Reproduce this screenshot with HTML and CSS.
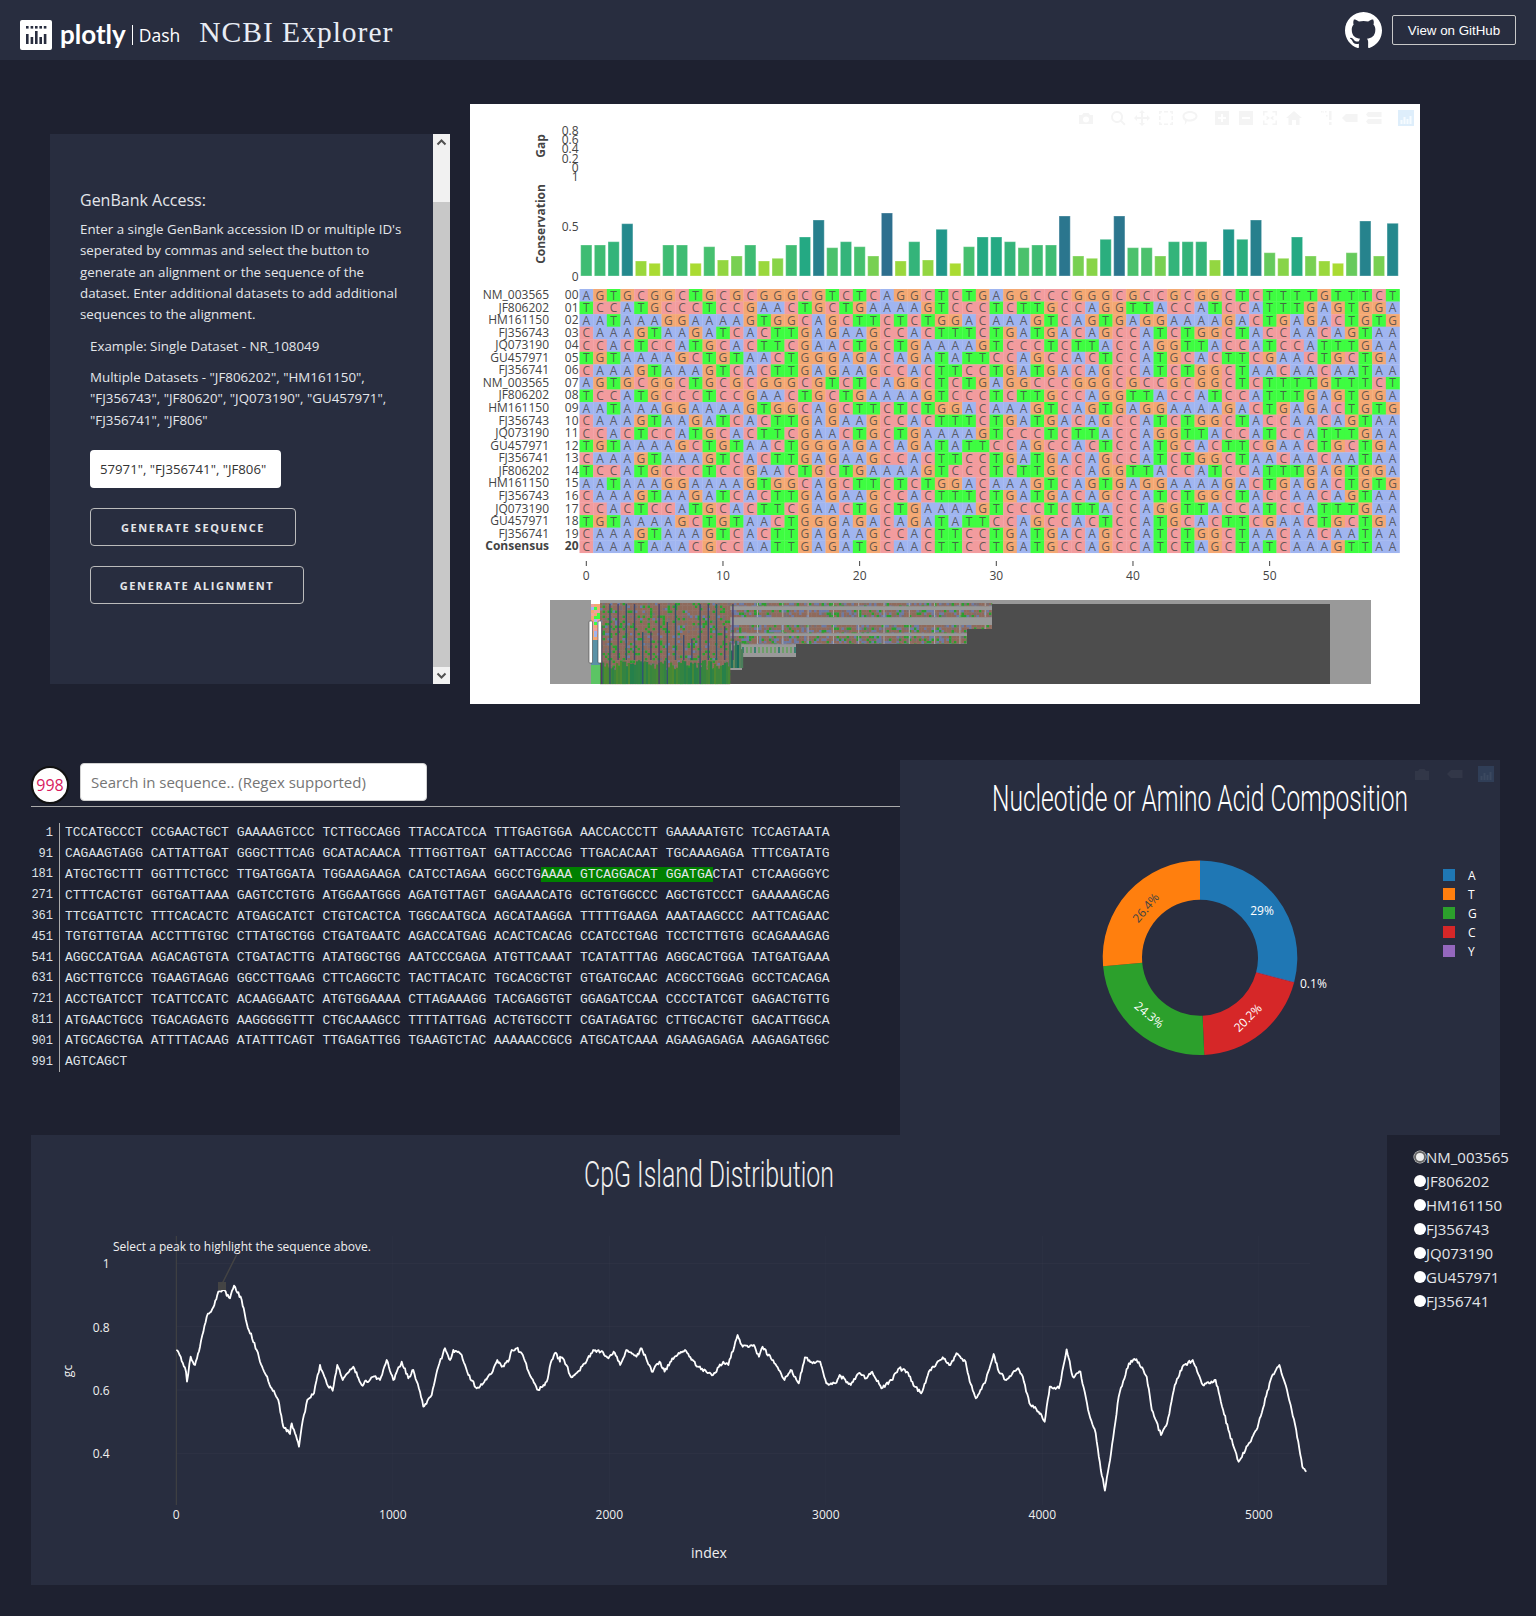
FILE: index.html
```html
<!DOCTYPE html>
<html lang="en">
<head>
    <meta charset="UTF-8">
    <meta name="viewport" content="width=device-width, initial-scale=1.0">
    <title>NCBI Explorer</title>
    <link rel="stylesheet" href="styles.css">
</head>
<body>
    <header class="navbar">
        <div class="brand">
            <svg class="brand-mark" viewBox="0 0 32 30" width="32" height="30">
                <rect width="32" height="30" rx="2" fill="#fff"/>
                <g fill="#282d3f">
                    <rect x="6" y="6" width="2.6" height="2.6"/>
                    <rect x="10.6" y="6" width="2.6" height="2.6"/>
                    <rect x="15" y="6" width="2.6" height="2.6"/>
                    <rect x="19.4" y="6" width="2.6" height="2.6"/>
                    <rect x="23.8" y="6" width="2.6" height="2.6"/>
                    <rect x="6" y="14" width="2.6" height="10"/>
                    <rect x="10.6" y="17" width="2.6" height="7"/>
                    <rect x="15" y="11" width="2.6" height="13"/>
                    <rect x="19.4" y="17" width="2.6" height="7"/>
                    <rect x="23.8" y="14" width="2.6" height="10"/>
                </g>
            </svg>
            <span class="brand-plotly">plotly</span>
            <span class="brand-dash">Dash</span>
            <h1 class="app-title">NCBI Explorer</h1>
        </div>
        <div class="nav-links">
            <svg class="github-mark" viewBox="0 0 16 16" width="37" height="37">
                <path fill="#fff" d="M8 0C3.58 0 0 3.58 0 8c0 3.54 2.29 6.53 5.47 7.59.4.07.55-.17.55-.38 0-.19-.01-.82-.01-1.49-2.01.37-2.53-.49-2.69-.94-.09-.23-.48-.94-.82-1.13-.28-.15-.68-.52-.01-.53.63-.01 1.08.58 1.23.82.72 1.21 1.87.87 2.33.66.07-.52.28-.87.51-1.07-1.78-.2-3.64-.89-3.64-3.95 0-.87.31-1.59.82-2.15-.08-.2-.36-1.02.08-2.12 0 0 .67-.21 2.2.82.64-.18 1.32-.27 2-.27.68 0 1.36.09 2 .27 1.53-1.04 2.2-.82 2.2-.82.44 1.1.16 1.92.08 2.12.51.56.82 1.27.82 2.15 0 3.07-1.87 3.75-3.65 3.95.29.25.54.73.54 1.48 0 1.07-.01 1.93-.01 2.2 0 .21.15.46.55.38A8.013 8.013 0 0016 8c0-4.42-3.58-8-8-8z"/>
            </svg>
            <a class="github-btn" href="#">View on GitHub</a>
        </div>
    </header>

    <section class="row-top">
        <div class="access-panel">
            <div class="access-body">
                <h3>GenBank Access:</h3>
                <p class="intro">Enter a single GenBank accession ID or multiple ID's seperated by commas and select the button to generate an alignment or the sequence of the dataset. Enter additional datasets to add additional sequences to the alignment.</p>
                <p class="example">Example: Single Dataset - NR_108049</p>
                <p class="example">Multiple Datasets - "JF806202", "HM161150", "FJ356743", "JF80620", "JQ073190", "GU457971", "FJ356741", "JF806"</p>
                <input class="accession-input" type="text" value='57971", "FJ356741", "JF806"' readonly>
                <button class="action-btn seq-btn">Generate Sequence</button>
                <button class="action-btn align-btn">Generate Alignment</button>
            </div>
            <div class="fake-scrollbar">
                <div class="scroll-arrow"><svg viewBox="0 0 17 17" width="17" height="17"><path d="M4.5 10.5 8.5 6.5 12.5 10.5" fill="none" stroke="#505050" stroke-width="2"/></svg></div>
                <div class="scroll-gap"></div>
                <div class="scroll-thumb"></div>
                <div class="scroll-arrow"><svg viewBox="0 0 17 17" width="17" height="17"><path d="M4.5 6.5 8.5 10.5 12.5 6.5" fill="none" stroke="#505050" stroke-width="2"/></svg></div>
            </div>
        </div>
        <svg class="alignment-plot" id="alignment" viewBox="470 104 950 600" width="950" height="600"></svg>
    </section>

    <section class="row-middle">
        <div class="sequence-col">
            <div class="search-row">
                <div class="match-count">998</div>
                <input class="search-input" type="text" placeholder="Search in sequence.. (Regex supported)">
            </div>
            <div class="sequence-block">
                <div class="seq-line"><span class="seq-num">1</span><span class="seq-text">TCCATGCCCT CCGAACTGCT GAAAAGTCCC TCTTGCCAGG TTACCATCCA TTTGAGTGGA AACCACCCTT GAAAAATGTC TCCAGTAATA</span></div>
                <div class="seq-line"><span class="seq-num">91</span><span class="seq-text">CAGAAGTAGG CATTATTGAT GGGCTTTCAG GCATACAACA TTTGGTTGAT GATTACCCAG TTGACACAAT TGCAAAGAGA TTTCGATATG</span></div>
                <div class="seq-line"><span class="seq-num">181</span><span class="seq-text">ATGCTGCTTT GGTTTCTGCC TTGATGGATA TGGAAGAAGA CATCCTAGAA GGCCTG<mark class="seq-hit">AAAA GTCAGGACAT GGATGA</mark>CTAT CTCAAGGGYC</span></div>
                <div class="seq-line"><span class="seq-num">271</span><span class="seq-text">CTTTCACTGT GGTGATTAAA GAGTCCTGTG ATGGAATGGG AGATGTTAGT GAGAAACATG GCTGTGGCCC AGCTGTCCCT GAAAAAGCAG</span></div>
                <div class="seq-line"><span class="seq-num">361</span><span class="seq-text">TTCGATTCTC TTTCACACTC ATGAGCATCT CTGTCACTCA TGGCAATGCA AGCATAAGGA TTTTTGAAGA AAATAAGCCC AATTCAGAAC</span></div>
                <div class="seq-line"><span class="seq-num">451</span><span class="seq-text">TGTGTTGTAA ACCTTTGTGC CTTATGCTGG CTGATGAATC AGACCATGAG ACACTCACAG CCATCCTGAG TCCTCTTGTG GCAGAAAGAG</span></div>
                <div class="seq-line"><span class="seq-num">541</span><span class="seq-text">AGGCCATGAA AGACAGTGTA CTGATACTTG ATATGGCTGG AATCCCGAGA ATGTTCAAAT TCATATTTAG AGGCACTGGA TATGATGAAA</span></div>
                <div class="seq-line"><span class="seq-num">631</span><span class="seq-text">AGCTTGTCCG TGAAGTAGAG GGCCTTGAAG CTTCAGGCTC TACTTACATC TGCACGCTGT GTGATGCAAC ACGCCTGGAG GCCTCACAGA</span></div>
                <div class="seq-line"><span class="seq-num">721</span><span class="seq-text">ACCTGATCCT TCATTCCATC ACAAGGAATC ATGTGGAAAA CTTAGAAAGG TACGAGGTGT GGAGATCCAA CCCCTATCGT GAGACTGTTG</span></div>
                <div class="seq-line"><span class="seq-num">811</span><span class="seq-text">ATGAACTGCG TGACAGAGTG AAGGGGGTTT CTGCAAAGCC TTTTATTGAG ACTGTGCCTT CGATAGATGC CTTGCACTGT GACATTGGCA</span></div>
                <div class="seq-line"><span class="seq-num">901</span><span class="seq-text">ATGCAGCTGA ATTTTACAAG ATATTTCAGT TTGAGATTGG TGAAGTCTAC AAAAACCGCG ATGCATCAAA AGAAGAGAGA AAGAGATGGC</span></div>
                <div class="seq-line"><span class="seq-num">991</span><span class="seq-text">AGTCAGCT</span></div>
            </div>
        </div>
        <svg class="pie-plot" id="pie" viewBox="900 760 600 375" width="600" height="375"></svg>
    </section>

    <section class="row-bottom">
        <svg class="cpg-plot" id="cpg" viewBox="31 1135 1356 450" width="1356" height="450"></svg>
        <div class="radio-list">
            <label class="radio-item"><input type="radio" name="dataset" checked>NM_003565</label>
            <label class="radio-item"><input type="radio" name="dataset">JF806202</label>
            <label class="radio-item"><input type="radio" name="dataset">HM161150</label>
            <label class="radio-item"><input type="radio" name="dataset">FJ356743</label>
            <label class="radio-item"><input type="radio" name="dataset">JQ073190</label>
            <label class="radio-item"><input type="radio" name="dataset">GU457971</label>
            <label class="radio-item"><input type="radio" name="dataset">FJ356741</label>
        </div>
    </section>

    <script src="script.js"></script>
</body>
</html>
```

FILE: styles.css
```css
* {
    box-sizing: border-box;
}
body {
    margin: 0;
    height: 1616px;
    overflow: hidden;
    background-color: #1e2130;
    color: #e4e6ea;
    font-family: "Open Sans", "Liberation Sans", sans-serif;
}
.navbar {
    height: 60px;
    padding: 0 20px;
    display: flex;
    align-items: center;
    justify-content: space-between;
    background-color: #282d3f;
}
.brand {
    padding-top: 10px;
    display: flex;
    align-items: center;
}
.brand-mark {
    display: block;
}
.brand-plotly {
    margin: 0 0 2px 8px;
    font-family: "Lato", "Open Sans", sans-serif;
    font-size: 26px;
    font-weight: 700;
    color: #fff;
}
.brand-dash {
    margin: 0 0 1px 6px;
    padding-left: 6px;
    border-left: 1px solid #fff;
    font-size: 17.5px;
    line-height: 20px;
    color: #fff;
}
.app-title {
    margin: 0 0 6px 19px;
    font-family: "Liberation Serif", serif;
    font-size: 29.5px;
    font-weight: 400;
    letter-spacing: 1px;
    color: #e8ecf4;
}
.nav-links {
    display: flex;
    align-items: center;
    gap: 10px;
}
.github-btn {
    width: 124px;
    height: 30px;
    padding-top: 1px;
    border: 1px solid #c8c8c8;
    border-radius: 2px;
    display: flex;
    align-items: center;
    justify-content: center;
    font-family: "Liberation Sans", sans-serif;
    font-size: 13.33px;
    color: #fff;
    text-decoration: none;
}

/* top row */
.row-top {
    margin-top: 44px;
    padding-left: 50px;
    display: flex;
    align-items: flex-start;
    gap: 20px;
}
.access-panel {
    width: 400px;
    height: 550px;
    margin-top: 30px;
    display: flex;
    background-color: #282d3f;
}
.access-body {
    flex: 1;
    padding: 55px 30px 0;
}
.access-body h3 {
    margin: 0 0 8px;
    font-size: 16px;
    font-weight: 400;
    line-height: 22px;
}
.intro {
    margin: 0 0 10px;
    font-size: 13.33px;
    line-height: 21.33px;
}
.example {
    margin: 0 0 10px 10px;
    font-size: 13.33px;
    line-height: 21.33px;
}
.accession-input {
    display: block;
    width: 191px;
    height: 38px;
    margin: 19px 0 0 10px;
    padding: 0 10px;
    border: 0;
    border-radius: 4px;
    background-color: #fff;
    font-family: "Open Sans", sans-serif;
    font-size: 13.2px;
    color: #333;
}
.action-btn {
    display: block;
    height: 38px;
    margin: 20px 0 0 10px;
    padding: 2px 0 0;
    border: 1px solid #bbb;
    border-radius: 4px;
    background: none;
    font-family: "Open Sans", sans-serif;
    font-size: 11px;
    font-weight: 700;
    letter-spacing: 1.6px;
    text-transform: uppercase;
    color: #e4e6ea;
}
.seq-btn {
    width: 206px;
}
.align-btn {
    width: 214px;
}
.fake-scrollbar {
    width: 17px;
    display: flex;
    flex-direction: column;
    background-color: #f1f1f1;
}
.scroll-arrow {
    height: 17px;
}
.scroll-arrow svg {
    display: block;
}
.scroll-gap {
    height: 51px;
}
.scroll-thumb {
    flex: 1;
    background-color: #c8c8c8;
}
.alignment-plot {
    display: block;
    background-color: #fff;
}
.alignment-plot text {
    font-family: "Open Sans", sans-serif;
    font-size: 12px;
    fill: #444;
}
.alignment-plot .cell-text {
    text-anchor: middle;
    fill: #444;
    fill-opacity: 0.8;
}
.alignment-plot .strong-text {
    font-weight: 700;
}

/* sequence + pie */
.row-middle {
    margin-top: 56px;
    padding-left: 31px;
    display: flex;
}
.sequence-col {
    width: 869px;
}
.search-row {
    height: 44px;
    margin-top: 3px;
    display: flex;
    align-items: flex-start;
    gap: 11px;
    border-bottom: 1px solid #aaa;
}
.match-count {
    width: 38px;
    height: 38px;
    margin-top: 2.5px;
    border: 2px solid #111;
    border-radius: 50%;
    display: flex;
    align-items: center;
    justify-content: center;
    background-color: #fff;
    font-size: 16px;
    color: #d81b60;
}
.search-input {
    width: 347px;
    height: 38px;
    padding: 0 10px;
    border: 1px solid #d1d1d1;
    border-radius: 4px;
    background-color: #fff;
    font-family: "Open Sans", sans-serif;
    font-size: 15px;
}
.search-input::placeholder {
    color: #757575;
}
.sequence-block {
    margin-top: 15.5px;
}
.seq-line {
    height: 20.8px;
    display: flex;
    align-items: center;
    font-family: "Liberation Mono", monospace;
    font-size: 13px;
    white-space: pre;
    color: #dfe2e8;
}
.seq-num {
    width: 23px;
    height: 100%;
    padding-right: 1px;
    display: flex;
    align-items: center;
    justify-content: flex-end;
    font-size: 12px;
}
.seq-text {
    height: 100%;
    margin-left: 5px;
    padding-left: 5px;
    display: flex;
    align-items: center;
    border-left: 1px solid #aaa;
}
.seq-hit {
    padding: 0;
    background-color: #008000;
    color: #e4e6ea;
}
.pie-plot {
    display: block;
    background-color: #282d3f;
}
.pie-plot text {
    font-family: "Open Sans", sans-serif;
    font-size: 12px;
    fill: #fff;
}
.pie-plot .dark-label {
    fill: #444;
}
.plot-title {
    font-family: "Roboto", "Liberation Sans", sans-serif !important;
    font-size: 37px !important;
    font-weight: 300;
    text-anchor: middle;
    fill: #fff;
}

/* cpg row */
.row-bottom {
    padding-left: 31px;
    display: flex;
}
.cpg-plot {
    display: block;
    background-color: #282d3f;
}
.cpg-plot text {
    font-family: "Open Sans", sans-serif;
    font-size: 12px;
    fill: #f0f0f0;
}
.cpg-plot .axis-title {
    font-size: 14px;
    text-anchor: middle;
}
.radio-list {
    padding: 10px 0 0 27px;
}
.radio-item {
    height: 24px;
    display: flex;
    align-items: center;
    font-size: 15px;
    line-height: 24px;
    color: #e4e6ea;
}
.radio-item input {
    appearance: none;
    width: 12px;
    height: 12px;
    margin: 0;
    border-radius: 50%;
    background-color: #fff;
}
.radio-item input:checked {
    border: 2px solid #666;
    background-color: #eee;
    box-shadow: 0 0 0 0.5px #ddd;
}
```

FILE: script.js
```js
var NS = 'http://www.w3.org/2000/svg';
var seed = 4711;

function rnd() {
    seed = (seed * 16807) % 2147483647;
    return seed / 2147483647;
}

function el(parent, name, attrs, text) {
    var node = document.createElementNS(NS, name);
    for (var key in attrs) {
        node.setAttribute(key, attrs[key]);
    }
    if (text !== undefined) {
        node.textContent = text;
    }
    parent.appendChild(node);
    return node;
}

function mix(a, b, t) {
    var out = '#';
    for (var i = 1; i < 7; i += 2) {
        var v = Math.round(parseInt(a.substr(i, 2), 16) * (1 - t) + parseInt(b.substr(i, 2), 16) * t);
        out += ('0' + v.toString(16)).slice(-2);
    }
    return out;
}

/* ---------- alignment chart ---------- */
var svg = document.getElementById('alignment');

var SEQS = {
    NM: 'AGTGCGGCTGCGCGGGCGTCTCAGGCTCTGAGGCCCGGGCGCCGCGGCTCTTTTGTTTCT',
    JF: 'TCCATGCCCTCCGAACTGCTGAAAAGTCCCTCTTGCCAGGTTACCATCCATTTGAGTGGA',
    HM: 'AATAAAGGAAAAGTGGCAGCTTCTCTGGACAAAGTCAGTGAGGAAAAGACTGAGACTGTG',
    F3: 'CAAAGTAAGATCACTTGAGAAGCCACTTTCTGATGACAGCCATCTGGCTACCAACAGTAA',
    JQ: 'CCACTCCATGCACTTCGAACTGCTGAAAAGTCCCTCTTACCAGGTTACCATCCATTTGAA',
    GU: 'TGTAAAAGCTGTAACTGGGAGACAGATATTCCAGCCACTCCATGCACTTCGAACTGCTGA',
    F4: 'CAAAGTAAAGTCACTTGAGAAGCCACTTCCTGATGACAGCCATCTGGCTAACAACAATAA',
    CO: 'CAAATAAACGCCAATTGAGATGCAACTTCCTGATGCCAGCCATCTAGCTATCAAAGTTAA'
};
var ROWS = [
    ['NM_003565', 'NM'], ['JF806202', 'JF'], ['HM161150', 'HM'], ['FJ356743', 'F3'],
    ['JQ073190', 'JQ'], ['GU457971', 'GU'], ['FJ356741', 'F4'], ['NM_003565', 'NM'],
    ['JF806202', 'JF'], ['HM161150', 'HM'], ['FJ356743', 'F3'], ['JQ073190', 'JQ'],
    ['GU457971', 'GU'], ['FJ356741', 'F4'], ['JF806202', 'JF'], ['HM161150', 'HM'],
    ['FJ356743', 'F3'], ['JQ073190', 'JQ'], ['GU457971', 'GU'], ['FJ356741', 'F4'],
    ['Consensus', 'CO']
];
var BASE_COLORS = { A: '#a0b5f0', C: '#f29c9e', G: '#f4a873', T: '#3efd41' };
var CELL_W = 13.667;
var CELL_H = 12.56;

ROWS.forEach(function(row, r) {
    var seq = SEQS[row[1]];
    var y = 289 + r * CELL_H;
    var labelClass = row[0] === 'Consensus' ? 'strong-text' : '';
    var num = r < 10 ? '0' + r : '' + r;
    el(svg, 'text', { x: 549, y: y + 10, 'text-anchor': 'end', 'class': labelClass }, row[0]);
    el(svg, 'text', { x: 578.5, y: y + 10, 'text-anchor': 'end', 'class': labelClass }, num);
    for (var c = 0; c < seq.length; c++) {
        el(svg, 'rect', {
            x: 579.5 + c * CELL_W, y: y,
            width: CELL_W + 0.3, height: CELL_H + 0.3,
            fill: BASE_COLORS[seq[c]]
        });
    }
    for (var t = 0; t < seq.length; t++) {
        el(svg, 'text', { x: 586.3 + t * CELL_W, y: y + 10.5, 'class': 'cell-text' }, seq[t]);
    }
});

/* conservation bars, heights read off as pixels above the baseline */
var BAR_H = [
    31, 31, 34.3, 52.3, 15, 12.7, 31, 31, 12.7, 29.3, 16, 20, 31, 15, 17.7, 31, 39, 56, 28.3, 34.3, 29.3, 20, 63, 15, 34.3, 16, 46.7,
    12.7, 29.3, 39, 39, 34.3, 28.3, 31, 31, 60, 20, 17.7, 36.7, 60, 28.3, 28.3, 20, 34.3, 34.3, 34.3, 16, 46.7, 36.7, 56, 23.3, 17.7, 39, 20, 15, 12.7, 23.3, 55, 20, 52.7
];
var VIRIDIS = ['#fde725', '#bddf26', '#7ad151', '#44bf70', '#22a884', '#21918c', '#2a788e', '#35608d', '#414487'];

function barColor(h) {
    var v = h / 98.6;
    var pos = v * 10;
    var i = Math.floor(pos);
    return mix(VIRIDIS[i], VIRIDIS[i + 1], pos - i);
}

BAR_H.forEach(function(h, i) {
    el(svg, 'rect', {
        x: 580.7 + i * CELL_W, y: 276 - h,
        width: 11.2, height: h,
        fill: barColor(h), stroke: '#fff', 'stroke-opacity': 0.3, 'stroke-width': 1
    });
});

[['0.8', 135], ['0.6', 143.5], ['0.4', 152.5], ['0.2', 162.5], ['0', 171.5], ['1', 181], ['0.5', 231], ['0', 281]].forEach(function(t) {
    el(svg, 'text', { x: 578.5, y: t[1], 'text-anchor': 'end' }, t[0]);
});
el(svg, 'text', { 'class': 'strong-text', 'text-anchor': 'middle', transform: 'translate(545 146) rotate(-90)' }, 'Gap');
el(svg, 'text', { 'class': 'strong-text', 'text-anchor': 'middle', transform: 'translate(545 224) rotate(-90)' }, 'Conservation');

for (var tick = 0; tick <= 50; tick += 10) {
    var tx = 586.3 + tick * CELL_W;
    el(svg, 'line', { x1: tx, x2: tx, y1: 561, y2: 566, stroke: '#444' });
    el(svg, 'text', { x: tx, y: 580, 'text-anchor': 'middle' }, tick);
}

/* modebar, barely visible */
var ICONS = [
    [1086, 'M1 5h3l1.500-2h5L12 5h3v9H1zM8 6.500a3 3 0 1 0 0 6 3 3 0 0 0 0-6z'],
    [1118, 'M7 1a6 6 0 1 0 3.600 10.800l3.600 3.700 1.400-1.400-3.600-3.700A6 6 0 0 0 7 1zm0 2a4 4 0 1 1 0 8 4 4 0 0 1 0-8z'],
    [1142, 'M8 0l3 3H9v4h4V5l3 3-3 3V9H9v4h2l-3 3-3-3h2V9H3v2L0 8l3-3v2h4V3H5z'],
    [1166, 'M1 1h3v1.500H2.500V4H1zM6 1h4v1.500H6zM12 1h3v3h-1.500V2.500H12zM1 6h1.500v4H1zM13.500 6H15v4h-1.500zM1 12h1.500v1.500H4V15H1zM6 13.500h4V15H6zM13.500 12H15v3h-3v-1.500h1.500z'],
    [1190, 'M8 1c4.400 0 7.500 2.300 7.500 5.200S12 11.500 7.500 11.500c-1 0-1.800-.1-2.600-.3-.3 1.300-1.300 3-2.400 3.800.5-1.200.7-2.800.5-4.300C1.300 9.800.5 8.200.5 6.200.5 3.300 3.600 1 8 1zm0 2C5 3 2.500 4.300 2.500 6.200S5 9.500 7.500 9.500s6-1.400 6-3.300S11 3 8 3z'],
    [1222, 'M1 1h14v14H1zM7 4v3H4v2h3v3h2V9h3V7H9V4z'],
    [1246, 'M1 1h14v14H1zM4 7v2h8V7z'],
    [1270, 'M1 1h4.500v1.500H2.500v3H1zM10.500 1H15v4.500h-1.500v-3h-3zM1 10.500h1.500v3h3V15H1zM13.500 10.500H15V15h-4.500v-1.500h3zM5 6l-1 1 1.500 1L4 9l1 1 3-2 3 2 1-1-1.500-1L12 7l-1-1-3 2z'],
    [1294, 'M8 1l8 7h-2.500v7H10v-5H6v5H2.500V8H0z'],
    [1325, 'M8 1h1.500v1.500H8zM4 1h1.500v1.500H4zM12 1h2.500v9H12zM12 12h2.500v3H12zM9 5h1.500v1.500H9zM6 1.500h1v1H6z'],
    [1350, 'M0 8l4-4h11.500v8H4z'],
    [1374, 'M2 2h13.500v5H2L0 4.500zM2 9h13.500v5H2L0 11.500z']
];
ICONS.forEach(function(ic) {
    el(svg, 'path', { d: ic[1], fill: '#f4f4f4', transform: 'translate(' + (ic[0] - 8) + ' 110)' });
});
el(svg, 'rect', { x: 1398, y: 110, width: 16, height: 16, fill: '#deeefb' });
[[1400.5, 120, 2], [1403.5, 117, 5], [1406.5, 119, 3], [1409.5, 116, 6]].forEach(function(b) {
    el(svg, 'rect', { x: b[0], y: b[1], width: 2, height: 124 - b[1], fill: '#f6fbff' });
});

/* range slider */
var MASK = '#999999';
var DARK = '#4d4d4d';
el(svg, 'rect', { x: 550, y: 600, width: 821, height: 84, fill: MASK });

function noiseCell(x, y, w, h, kind) {
    var p = rnd();
    var colour;
    if (kind === 'bright') {
        colour = p < 0.4 ? '#f0a0a0' : p < 0.7 ? '#f4a873' : p < 0.85 ? '#a0b5f0' : '#3efd41';
    } else if (kind === 'near') {
        colour = p < 0.72 ? '#8f6a5c' : p < 0.78 ? '#7a6d72' : p < 0.84 ? '#6d7aa4' : '#2c9e30';
    } else {
        colour = p < 0.5 ? '#8f6a5c' : p < 0.62 ? '#7a6d72' : p < 0.84 ? '#6d7aa4' : '#2c9e30';
    }
    el(svg, 'rect', { x: x, y: y, width: w + 0.2, height: h + 0.2, fill: colour });
}

var nx, ny;
// window onto the plot
el(svg, 'rect', { x: 591, y: 600, width: 9, height: 4, fill: '#fff' });
for (ny = 604; ny < 640; ny += 3) {
    for (nx = 591; nx < 600; nx += 3) {
        noiseCell(nx, ny, 3, 3, 'bright');
    }
}
el(svg, 'rect', { x: 591, y: 640, width: 9, height: 25, fill: '#4f8fa8', opacity: 0.85 });
el(svg, 'rect', { x: 591, y: 665, width: 9, height: 19, fill: '#5cc464' });

// masked minimap heat rows
var BANDS = [[603, 606], [610, 617], [625, 633], [636, 644]];
BANDS.forEach(function(b, i) {
    var right = i < 3 ? 992 : 967;
    for (ny = b[0]; ny < b[1]; ny += 2.5) {
        for (nx = 729; nx < right; nx += 2.5) {
            noiseCell(nx, ny, Math.min(2.5, right - nx), Math.min(2.5, b[1] - ny), 'far');
        }
    }
    for (nx = 757; nx < right; nx += 25.3) {
        el(svg, 'rect', { x: nx, y: b[0], width: 1, height: b[1] - b[0], fill: '#aaa' });
    }
});
for (nx = 742; nx < 795; nx += 4) {
    el(svg, 'rect', { x: nx, y: 647, width: 2, height: 6, fill: rnd() < 0.5 ? '#3c7f72' : '#6f9f6a' });
}
el(svg, 'rect', { x: 992, y: 604, width: 338, height: 80, fill: DARK });
el(svg, 'rect', { x: 967, y: 629, width: 25, height: 55, fill: DARK });
el(svg, 'rect', { x: 796, y: 644, width: 171, height: 40, fill: DARK });
el(svg, 'rect', { x: 742, y: 657, width: 54, height: 27, fill: DARK });
el(svg, 'rect', { x: 729, y: 670, width: 13, height: 14, fill: DARK });

for (ny = 603; ny < 684; ny += 2.5) {
    for (nx = 600; nx < 729; nx += 2.5) {
        noiseCell(nx, ny, 2.5, Math.min(2.5, 684 - ny), 'near');
    }
}
for (nx = 729; nx < 742; nx += 2) {
    var backTop = 640 + rnd() * 12;
    el(svg, 'rect', { x: nx, y: backTop, width: 2.2, height: 668 - backTop, fill: mix('#176a5a', '#6f8a5c', rnd()) });
}
for (nx = 600; nx < 729; nx += 2) {
    var top = 630 + rnd() * 16;
    if (rnd() < 0.12) {
        top -= 14;
    }
    el(svg, 'rect', { x: nx, y: top, width: 2.2, height: 684 - top, fill: mix('#165f58', '#1f7456', rnd()) });
    var footTop = 660 + rnd() * 10;
    el(svg, 'rect', { x: nx, y: footTop, width: 2.2, height: 684 - footTop, fill: mix('#24804c', '#4f8a30', rnd()) });
}
for (nx = 601; nx < 735; nx += 8.2) {
    var lineTop = rnd() < 0.5 ? 604 : 622 + rnd() * 18;
    var lineEnd = rnd() < 0.25 ? 684 : 660;
    el(svg, 'rect', { x: nx, y: lineTop, width: 1.4, height: lineEnd - lineTop, fill: mix('#56386a', '#2a5a72', rnd()) });
}
el(svg, 'rect', { x: 589, y: 621, width: 3.500, height: 42, rx: 1, fill: '#fff', stroke: '#444', 'stroke-width': 0.6 });
el(svg, 'rect', { x: 598, y: 621, width: 3.500, height: 42, rx: 1, fill: '#fff', stroke: '#444', 'stroke-width': 0.6 });

/* ---------- composition donut ---------- */
var pie = document.getElementById('pie');
el(pie, 'text', { x: 1200, y: 811, 'class': 'plot-title', textLength: 416, lengthAdjust: 'spacingAndGlyphs' }, 'Nucleotide or Amino Acid Composition');

var SLICES = [
    ['A', 29, '#1f77b4'], ['Y', 0.1, '#9467bd'], ['C', 20.2, '#d62728'],
    ['G', 24.3, '#2ca02c'], ['T', 26.4, '#ff7f0e']
];
var PIE_X = 1200;
var PIE_Y = 957.7;

function polar(r, frac) {
    var a = frac * 2 * Math.PI;
    return (PIE_X + r * Math.sin(a)).toFixed(2) + ' ' + (PIE_Y - r * Math.cos(a)).toFixed(2);
}

var start = 0;
SLICES.forEach(function(s) {
    var end = start + s[1] / 100;
    var large = end - start > 0.5 ? 1 : 0;
    var d = 'M' + polar(97.3, start) + 'A97.3 97.3 0 ' + large + ' 1 ' + polar(97.3, end) +
        'L' + polar(58, end) + 'A58 58 0 ' + large + ' 0 ' + polar(58, start) + 'Z';
    el(pie, 'path', { d: d, fill: s[2] });
    start = end;
});

[['29%', 1262, 911, 0, ''], ['26.4%', 1146, 908, -50, 'dark-label'], ['24.3%', 1149, 1015, 40, ''], ['20.2%', 1248, 1018, -45, '']].forEach(function(l) {
    el(pie, 'text', {
        'text-anchor': 'middle', 'class': l[4],
        transform: 'translate(' + l[1] + ' ' + l[2] + ') rotate(' + l[3] + ') translate(0 4)'
    }, l[0]);
});
el(pie, 'text', { x: 1300, y: 988 }, '0.1%');

[['A', '#1f77b4'], ['T', '#ff7f0e'], ['G', '#2ca02c'], ['C', '#d62728'], ['Y', '#9467bd']].forEach(function(item, i) {
    var ly = 875 + i * 19;
    el(pie, 'rect', { x: 1443, y: ly - 6, width: 12, height: 12, fill: item[1] });
    el(pie, 'text', { x: 1468, y: ly + 5 }, item[0]);
});

el(pie, 'path', { d: 'M1 5h3l1.500-2h5L12 5h3v9H1z', fill: '#fff', 'fill-opacity': 0.05, transform: 'translate(1414 766)' });
el(pie, 'path', { d: 'M0 8l4-4h11.500v8H4z', fill: '#fff', 'fill-opacity': 0.05, transform: 'translate(1447 766)' });
el(pie, 'rect', { x: 1478, y: 766, width: 16, height: 16, fill: '#5a8fc8', 'fill-opacity': 0.18 });
[[1480.5, 776], [1483.5, 773], [1486.5, 775], [1489.5, 772]].forEach(function(b) {
    el(pie, 'rect', { x: b[0], y: b[1], width: 2, height: 780 - b[1], fill: '#fff', 'fill-opacity': 0.06 });
});

/* ---------- CpG line ---------- */
var cpg = document.getElementById('cpg');
el(cpg, 'text', { x: 709, y: 1187, 'class': 'plot-title', textLength: 250, lengthAdjust: 'spacingAndGlyphs' }, 'CpG Island Distribution');

[1263.3, 1326.7, 1390, 1453.3].forEach(function(gy) {
    el(cpg, 'line', { x1: 176, x2: 1310, y1: gy, y2: gy, stroke: '#fff', 'stroke-opacity': 0.03 });
});
[0, 1, 2, 3, 4, 5].forEach(function(k) {
    var gx = 176.3 + k * 216.5;
    if (k > 0) {
        el(cpg, 'line', { x1: gx, x2: gx, y1: 1236, y2: 1505, stroke: '#fff', 'stroke-opacity': 0.02 });
    }
    el(cpg, 'text', { x: gx, y: 1519, 'text-anchor': 'middle' }, k * 1000);
});
el(cpg, 'line', { x1: 176.3, x2: 176.3, y1: 1236, y2: 1505, stroke: '#444', 'stroke-width': 1 });
[['1', 1264.3], ['0.8', 1328.3], ['0.6', 1390.7], ['0.4', 1454.3]].forEach(function(t) {
    el(cpg, 'text', { x: 109.5, y: t[1] + 4, 'text-anchor': 'end' }, t[0]);
});
el(cpg, 'text', { transform: 'translate(72 1371) rotate(-90)', 'text-anchor': 'middle' }, 'gc');
el(cpg, 'text', { x: 709, y: 1558, 'class': 'axis-title' }, 'index');

// traced from the reference: left block from a 3x crop, right block from a crop squeezed to 1.96x horizontally
var LEFT_TRACE = [349,390,362,410,378,455,381,485,392,410,405,435,420,380,440,290,460,262,475,215,490,210,510,235,522,197,545,240,560,310,590,390,600,425,615,460,635,505,655,540,670,620,690,642,695,610,705,640,717,680,725,620,742,540,762,520,780,435,800,490,818,512,832,435,848,480,880,440,905,495,940,470,960,480,980,420,1000,480,1025,425,1045,475,1060,450,1080,515,1090,560,1115,525,1135,440,1155,385,1170,420,1180,390,1205,405,1225,465,1250,505,1270,490,1295,460,1312,420,1325,440,1345,425,1355,390,1370,385,1385,400,1415,475,1435,510,1460,485,1475,420,1487,398,1500,425];
var RIGHT_TRACE = [0,350,8,360,22,412,35,395,50,370,65,330,80,335,95,355,105,335,118,375,130,330,150,350,160,325,180,395,195,365,205,395,220,355,245,330,270,380,300,405,320,365,330,375,348,285,358,320,380,315,390,350,397,320,420,370,440,420,452,390,468,430,480,352,495,370,510,365,522,430,540,430,548,405,570,435,585,400,600,415,612,395,630,445,650,420,665,385,680,395,695,440,708,460,725,390,750,352,765,375,777,340,795,365,803,425,815,475,835,420,850,342,860,395,875,420,898,385,907,410,920,490,938,515,950,545,960,440,978,445,993,328,1005,410,1020,395,1035,510,1050,580,1060,690,1068,752,1080,640,1095,470,1115,370,1130,358,1150,410,1160,510,1178,585,1190,550,1205,435,1220,380,1240,360,1260,435,1285,420,1310,570,1330,665,1350,610,1365,570,1395,410,1410,375,1425,450,1443,570,1455,680,1463,695];
var points = [];
var idx;
for (idx = 0; idx < LEFT_TRACE.length; idx += 2) {
    points.push([60 + LEFT_TRACE[idx] / 3, 1220 + LEFT_TRACE[idx + 1] / 3]);
}
for (idx = 0; idx < RIGHT_TRACE.length; idx += 2) {
    points.push([560 + RIGHT_TRACE[idx] / 1.96, 1240 + RIGHT_TRACE[idx + 1] / 3]);
}
var lineD = '';
points.forEach(function(p, i) {
    if (i === 0) {
        lineD = 'M' + p[0].toFixed(1) + ' ' + p[1].toFixed(1);
        return;
    }
    var prev = points[i - 1];
    var steps = Math.max(1, Math.round((p[0] - prev[0]) / 1.1));
    for (var s = 1; s <= steps; s++) {
        var f = s / steps;
        var jitter = s === steps ? 0 : (rnd() - 0.5) * 3.4;
        lineD += 'L' + (prev[0] + (p[0] - prev[0]) * f).toFixed(1) + ' ' + (prev[1] + (p[1] - prev[1]) * f + jitter).toFixed(1);
    }
});
el(cpg, 'path', { d: lineD, fill: 'none', stroke: '#fff', 'stroke-width': 1.8, 'stroke-linejoin': 'round' });

el(cpg, 'line', { x1: 237, y1: 1254, x2: 222, y2: 1284, stroke: '#444', 'stroke-width': 1.5 });
el(cpg, 'rect', { x: 218, y: 1282, width: 8, height: 8, fill: '#444' });
el(cpg, 'text', { x: 113, y: 1251 }, 'Select a peak to highlight the sequence above.');
```
